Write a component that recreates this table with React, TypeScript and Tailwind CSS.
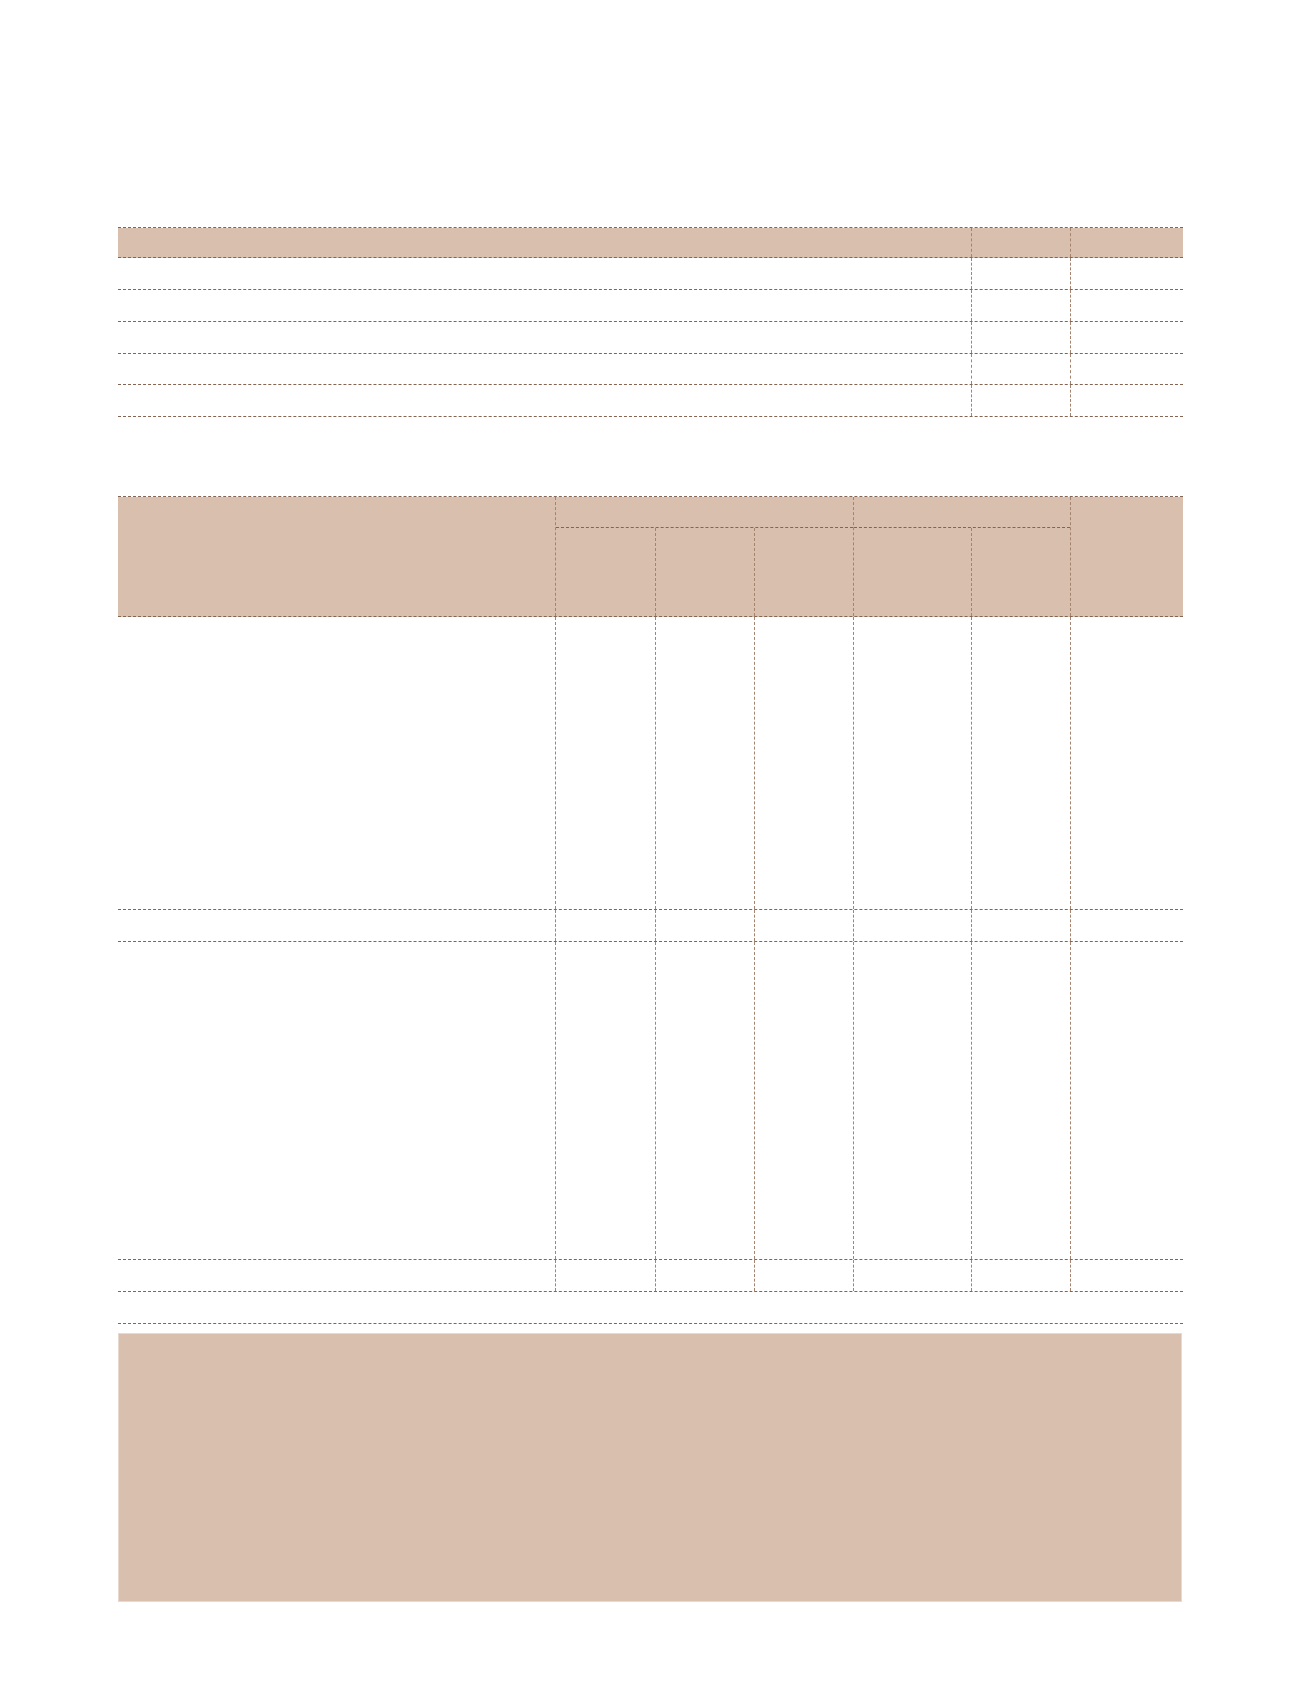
import React from "react";

const H = "border-dashed border-[#866452]";
const V = "border-dashed border-[#a4846f]";

function Row1({ h, header }: { h: string; header?: boolean }) {
  return (
    <div className={`flex ${h} border-b ${H} ${header ? "bg-[#d9bfad]" : ""}`}>
      <div className={`w-[854px] border-r ${V}`} />
      <div className={`w-[99px] border-r ${V}`} />
      <div className="w-[112px]" />
    </div>
  );
}

function Row2({ h }: { h: string }) {
  return (
    <div className={`flex ${h} border-b ${H}`}>
      <div className={`w-[438px] border-r ${V}`} />
      <div className={`w-[100px] border-r ${V}`} />
      <div className={`w-[99px] border-r ${V}`} />
      <div className={`w-[99px] border-r ${V}`} />
      <div className={`w-[118px] border-r ${V}`} />
      <div className={`w-[99px] border-r ${V}`} />
      <div className="w-[112px]" />
    </div>
  );
}

export default function App() {
  return (
    <div className="min-h-[1692px] bg-white pt-[227px] pl-[118px] font-['Liberation_Sans',sans-serif]">
      {/* Table 1 */}
      <div className={`w-[1065px] border-t ${H}`}>
        <Row1 h="h-[30px]" header />
        <Row1 h="h-[32px]" />
        <Row1 h="h-[32px]" />
        <Row1 h="h-[32px]" />
        <Row1 h="h-[31px]" />
        <Row1 h="h-[32px]" />
      </div>

      {/* Table 2 */}
      <div className={`mt-[79px] w-[1065px] border-t ${H}`}>
        <div className={`flex h-[120px] border-b ${H} bg-[#d9bfad]`}>
          <div className={`w-[438px] border-r ${V}`} />
          <div className={`flex w-[298px] flex-col border-r ${V}`}>
            <div className={`h-[31px] border-b ${H}`} />
            <div className="flex flex-1">
              <div className={`w-[100px] border-r ${V}`} />
              <div className={`w-[99px] border-r ${V}`} />
              <div className="w-[98px]" />
            </div>
          </div>
          <div className={`flex w-[217px] flex-col border-r ${V}`}>
            <div className={`h-[31px] border-b ${H}`} />
            <div className="flex flex-1">
              <div className={`w-[118px] border-r ${V}`} />
              <div className="w-[98px]" />
            </div>
          </div>
          <div className="w-[112px]" />
        </div>
        <Row2 h="h-[293px]" />
        <Row2 h="h-[32px]" />
        <Row2 h="h-[318px]" />
        <Row2 h="h-[32px]" />
        <div className={`h-[32px] border-b ${H}`} />
      </div>

      {/* Note box */}
      <div className="mt-[9px] h-[269px] w-[1064px] border border-[#e8d9ce] bg-[#d9bfad]" />
    </div>
  );
}
